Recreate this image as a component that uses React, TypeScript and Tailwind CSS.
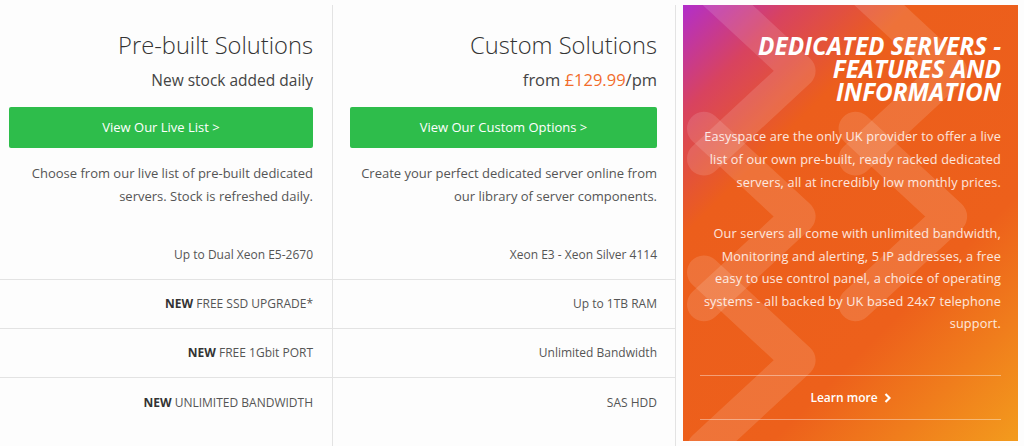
import React from "react";

const font = { fontFamily: '"Open Sans", "Noto Sans", sans-serif' };

type Feature = { bold?: string; text: string };

function FeatureRows({ rows }: { rows: Feature[] }) {
  return (
    <div className="mt-[23px] flex flex-col">
      {rows.map((r, i) => (
        <div
          key={i}
          className={`flex h-[49px] items-center justify-end text-[12px] text-[#555] ${
            i < rows.length - 1 ? "border-b border-[#e3e3e3]" : ""
          }`}
        >
          <span className="pr-[var(--pr)]">
            {r.bold && <b className="font-bold text-[#333]">{r.bold} </b>}
            {r.text}
          </span>
        </div>
      ))}
    </div>
  );
}

function Column({
  title,
  subtitle,
  button,
  desc,
  rows,
  padL,
  padR,
  className,
}: {
  title: string;
  subtitle: React.ReactNode;
  button: string;
  desc: string[];
  rows: Feature[];
  padL: number;
  padR: number;
  className: string;
}) {
  return (
    <div className={className} style={{ ["--pr" as string]: `${padR}px` }}>
      <div style={{ paddingLeft: padL, paddingRight: padR }} className="flex flex-col items-end">
        <h2 className="mt-[25px] text-[23.7px] leading-[30px] font-light text-[#333]">{title}</h2>
        <p className="mt-[8px] text-[16px] leading-[24px] text-[#444]">{subtitle}</p>
        <a
          href="#"
          className="mt-[15px] flex h-[41px] w-full items-center justify-center rounded-[2px] bg-[#2ebd4b] text-[13px] text-white"
        >
          {button}
        </a>
        <div className="mt-[14px] text-right text-[13px] leading-[23px] text-[#555]">
          {desc.map((d, i) => (
            <div key={i}>{d}</div>
          ))}
        </div>
      </div>
      <FeatureRows rows={rows} />
    </div>
  );
}

// Translucent chevron pattern behind the promo panel copy
function Chevrons() {
  const arm = (ax: number, ay: number) =>
    `M ${ax - 95} ${ay - 88} L ${ax} ${ay} L ${ax - 95} ${ay + 88}`;
  const marks: [number, number][] = [
    [116, 66],
    [116, 212],
    [116, 356],
    [268, 66],
    [268, 212],
  ];
  return (
    <svg
      className="pointer-events-none absolute inset-0 h-full w-full"
      viewBox="0 0 336 437"
      preserveAspectRatio="none"
    >
      {marks.map(([x, y], i) => (
        <path
          key={i}
          d={arm(x, y)}
          fill="none"
          stroke="white"
          strokeOpacity={0.13}
          strokeWidth={34}
          strokeLinecap="round"
          strokeLinejoin="round"
        />
      ))}
    </svg>
  );
}

export default function App() {
  return (
    <div style={font} className="flex h-[446px] w-[1024px] overflow-hidden bg-[#fdfdfd] pt-[5px]">
      <Column
        className="h-full w-[333px] shrink-0 border-r border-[#e3e3e3]"
        padL={9}
        padR={19}
        title="Pre-built Solutions"
        subtitle={<span className="text-[15.5px]">New stock added daily</span>}
        button="View Our Live List >"
        desc={["Choose from our live list of pre-built dedicated", "servers. Stock is refreshed daily."]}
        rows={[
          { text: "Up to Dual Xeon E5-2670" },
          { bold: "NEW", text: "FREE SSD UPGRADE*" },
          { bold: "NEW", text: "FREE 1Gbit PORT" },
          { bold: "NEW", text: "UNLIMITED BANDWIDTH" },
        ]}
      />
      <Column
        className="h-full w-[343px] shrink-0 border-r border-[#e3e3e3]"
        padL={17}
        padR={18}
        title="Custom Solutions"
        subtitle={
          <span className="text-[16.5px]">
            from <span className="text-[#f26c2b]">£129.99</span>/pm
          </span>
        }
        button="View Our Custom Options >"
        desc={["Create your perfect dedicated server online from", "our library of server components."]}
        rows={[
          { text: "Xeon E3 - Xeon Silver 4114" },
          { text: "Up to 1TB RAM" },
          { text: "Unlimited Bandwidth" },
          { text: "SAS HDD" },
        ]}
      />
      <div className="h-full flex-1 pl-[7px] pr-[6px] pb-[5px]">
        <div className="relative h-[436px] overflow-hidden bg-[linear-gradient(135deg,#b22ecb_0%,#d8435f_14%,#ec5e1c_30%,#ed601b_68%,#f39b1d_100%)]">
          <Chevrons />
          <div className="relative flex h-full flex-col px-[17px] pt-[29px] text-right text-white">
            <h3 className="text-[24.3px] leading-[23px] font-bold italic uppercase">
              Dedicated Servers -<br />
              Features and
              <br />
              Information
            </h3>
            <p className="mt-[22px] text-[12.7px] leading-[23px] tracking-[0.16px] text-white/85">
              Easyspace are the only UK provider to offer a live
              <br />
              list of our own pre-built, ready racked dedicated
              <br />
              servers, all at incredibly low monthly prices.
            </p>
            <p className="mt-[28px] text-[12.7px] leading-[22.6px] tracking-[0.16px] text-white/85">
              Our servers all come with unlimited bandwidth,
              <br />
              Monitoring and alerting, 5 IP addresses, a free
              <br />
              easy to use control panel, a choice of operating
              <br />
              systems - all backed by UK based 24x7 telephone
              <br />
              support.
            </p>
            <div className="mt-auto mb-[21px] flex h-[45px] items-center justify-center border-y border-white/40">
              <a href="#" className="flex items-center gap-[6px] text-[12px] font-semibold text-white">
                Learn more
                <svg width="7" height="10" viewBox="0 0 7 10">
                  <path d="M1.5 1 L5.5 5 L1.5 9" fill="none" stroke="white" strokeWidth="2.2" />
                </svg>
              </a>
            </div>
          </div>
        </div>
      </div>
    </div>
  );
}
